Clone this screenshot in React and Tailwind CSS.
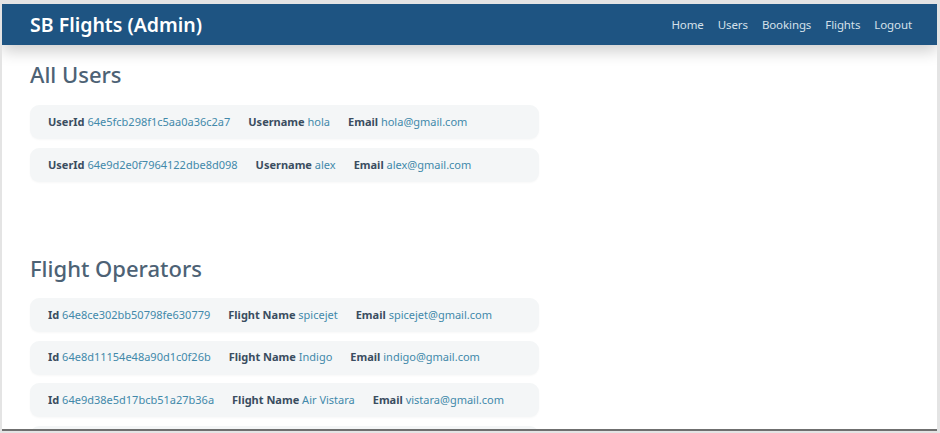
import React from "react";

const users = [
  { id: "64e5fcb298f1c5aa0a36c2a7", name: "hola", email: "hola@gmail.com" },
  { id: "64e9d2e0f7964122dbe8d098", name: "alex", email: "alex@gmail.com" },
];

const operators = [
  { id: "64e8ce302bb50798fe630779", name: "spicejet", email: "spicejet@gmail.com" },
  { id: "64e8d11154e48a90d1c0f26b", name: "Indigo", email: "indigo@gmail.com" },
  { id: "64e9d38e5d17bcb51a27b36a", name: "Air Vistara", email: "vistara@gmail.com" },
];

function Field({ label, value }) {
  return (
    <p className="whitespace-nowrap">
      <b className="font-bold text-[#3a4d60]">{label}</b>{" "}
      <span className="text-[#4289aa]">{value}</span>
    </p>
  );
}

function Row({ children }) {
  return (
    <div className="flex h-[34px] w-[509px] shrink-0 items-center gap-[18px] rounded-[9px] bg-[#f4f6f7] px-[18px] text-[11px] shadow-[0_1px_2px_rgba(0,0,0,0.03)]">
      {children}
    </div>
  );
}

export default function App() {
  return (
    <div
      className="h-[433px] w-[940px] overflow-hidden bg-[#e4e4e4] pb-[2px] pl-[2px] pr-[3px] pt-[4px]"
      style={{ fontFamily: '"Noto Sans", "Open Sans", sans-serif' }}
    >
      <div className="h-full overflow-hidden border-b-2 border-[#6f6f6f] bg-white">
        <nav className="relative z-10 flex h-[41px] items-center justify-between bg-[#1e5482] pl-[28px] pr-[25px] shadow-[0_6px_16px_rgba(0,0,0,0.2)]">
          <h1 className="text-[19.5px] font-semibold text-white">SB Flights (Admin)</h1>
          <div className="flex gap-[14px] text-[11.5px] tracking-[-0.1px] text-[#d5e0ea]">
            <span>Home</span>
            <span>Users</span>
            <span>Bookings</span>
            <span>Flights</span>
            <span>Logout</span>
          </div>
        </nav>
        <main className="pl-[28px]">
          <h2 className="mt-[16px] text-[22px] font-medium leading-[26px] text-[#4d6275]">All Users</h2>
          <div className="mt-[18px] flex flex-col gap-[9px]">
            {users.map((u) => (
              <Row key={u.id}>
                <Field label="UserId" value={u.id} />
                <Field label="Username" value={u.name} />
                <Field label="Email" value={u.email} />
              </Row>
            ))}
          </div>
          <h2 className="mt-[73px] text-[22px] font-medium leading-[26px] text-[#4d6275]">Flight Operators</h2>
          <div className="mt-[17px] flex flex-col gap-[8.5px]">
            {operators.map((o) => (
              <Row key={o.id}>
                <Field label="Id" value={o.id} />
                <Field label="Flight Name" value={o.name} />
                <Field label="Email" value={o.email} />
              </Row>
            ))}
            <div className="h-[34px] w-[509px] shrink-0 rounded-[9px] bg-[#f4f6f7]" />
          </div>
        </main>
      </div>
    </div>
  );
}
